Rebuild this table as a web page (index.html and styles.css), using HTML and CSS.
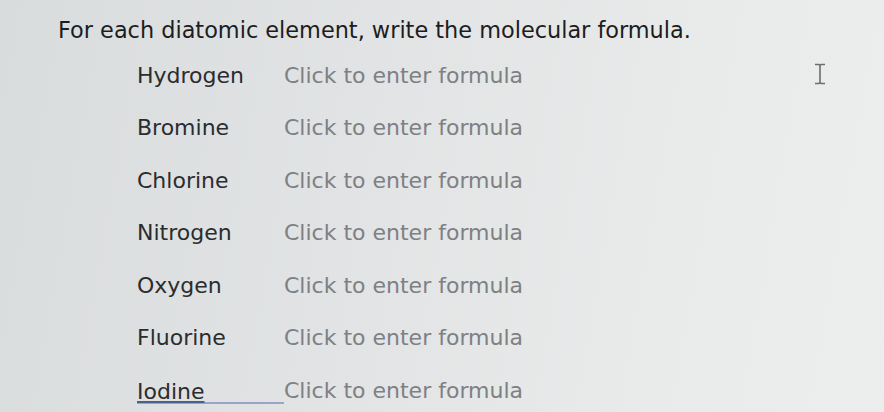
FILE: index.html
```html
<!DOCTYPE html>
<html lang="en">
<head>
    <meta charset="UTF-8">
    <meta name="viewport" content="width=device-width, initial-scale=1.0">
    <title>Diatomic elements</title>
    <link rel="stylesheet" href="styles.css">
</head>
<body>

    <div class="question">
        <p class="prompt">For each diatomic element, write the molecular formula.</p>

        <div class="answers">
            <span class="element">Hydrogen</span>
            <span class="formula">Click to enter formula</span>

            <span class="element">Bromine</span>
            <span class="formula">Click to enter formula</span>

            <span class="element">Chlorine</span>
            <span class="formula">Click to enter formula</span>

            <span class="element">Nitrogen</span>
            <span class="formula">Click to enter formula</span>

            <span class="element">Oxygen</span>
            <span class="formula">Click to enter formula</span>

            <span class="element">Fluorine</span>
            <span class="formula">Click to enter formula</span>

            <span class="element active">Iodine</span>
            <span class="formula">Click to enter formula</span>
        </div>
    </div>

    <!-- curseur texte -->
    <svg class="cursor" width="14" height="22" viewBox="0 0 14 22">
        <path d="M2 1.5h4l1 1 1-1h4M7 2.5v17M2 20.5h4l1-1 1 1h4" fill="none" stroke="#6a6d70" stroke-width="1.6"/>
    </svg>

</body>
</html>
```

FILE: styles.css
```css
body {
    margin: 0;
    padding: 0;
    height: 412px;
    overflow: hidden;
    position: relative;
    font-family: "DejaVu Sans", sans-serif;
    background: linear-gradient(100deg, #d9dcdd 0%, #e1e3e4 40%, #e9ebeb 75%, #eceeee 100%);
}

.question {
    padding: 16px 0 0 58px;
}

.prompt {
    margin: 0;
    font-size: 22.4px;
    line-height: 28px;
    color: #1c1d1f;
}

.answers {
    display: grid;
    grid-template-columns: 147px auto;
    grid-auto-rows: 52.5px;
    align-items: center;
    justify-content: start;
    margin: 5px 0 0 79px;
}

.element {
    font-size: 22px;
    color: #2b2c2e;
}

.formula {
    font-size: 22px;
    color: #7e8083;
}

.element.active {
    line-height: 21px;
    margin-top: 4px;
    text-decoration: underline;
    text-decoration-color: #4f5f8c;
    text-underline-offset: 2px;
    border-bottom: 2px solid #98a5c8;
}

.cursor {
    position: absolute;
    left: 813px;
    top: 63px;
}
```
